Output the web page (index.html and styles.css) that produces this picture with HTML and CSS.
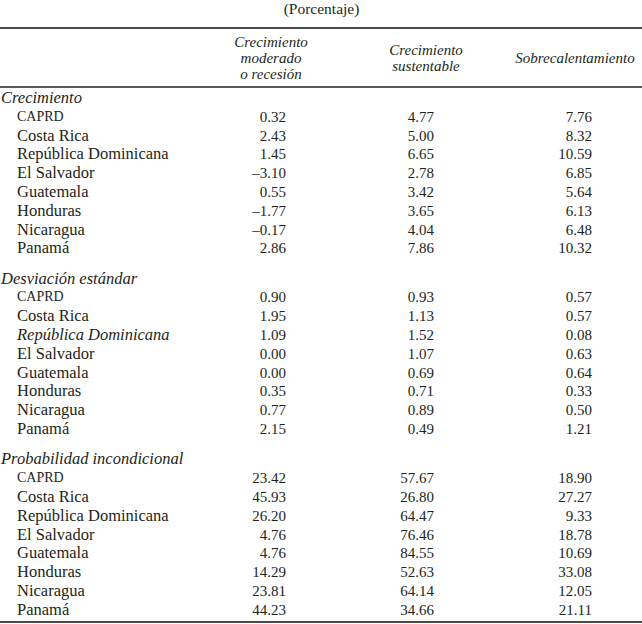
FILE: index.html
```html
<!DOCTYPE html>
<html lang="es">
<head>
<meta charset="utf-8">
<title>Porcentaje</title>
<link rel="stylesheet" href="styles.css">
</head>
<body>
<div class="caption">(Porcentaje)</div>
<table class="tbl">
  <colgroup>
    <col class="c-label">
    <col class="c-a">
    <col class="c-b">
    <col class="c-c">
  </colgroup>
  <thead>
    <tr>
      <th></th>
      <th class="h-a">Crecimiento<br>moderado<br>o recesión</th>
      <th class="h-b">Crecimiento<br>sustentable</th>
      <th class="h-c">Sobrecalentamiento</th>
    </tr>
  </thead>
  <tbody>
    <tr class="sec first"><td colspan="4">Crecimiento</td></tr>
    <tr><td class="name sc">CAPRD</td><td class="na">0.32</td><td class="nb">4.77</td><td class="nc">7.76</td></tr>
    <tr><td class="name">Costa Rica</td><td class="na">2.43</td><td class="nb">5.00</td><td class="nc">8.32</td></tr>
    <tr><td class="name">República Dominicana</td><td class="na">1.45</td><td class="nb">6.65</td><td class="nc">10.59</td></tr>
    <tr><td class="name">El Salvador</td><td class="na">–3.10</td><td class="nb">2.78</td><td class="nc">6.85</td></tr>
    <tr><td class="name">Guatemala</td><td class="na">0.55</td><td class="nb">3.42</td><td class="nc">5.64</td></tr>
    <tr><td class="name">Honduras</td><td class="na">–1.77</td><td class="nb">3.65</td><td class="nc">6.13</td></tr>
    <tr><td class="name">Nicaragua</td><td class="na">–0.17</td><td class="nb">4.04</td><td class="nc">6.48</td></tr>
    <tr><td class="name">Panamá</td><td class="na">2.86</td><td class="nb">7.86</td><td class="nc">10.32</td></tr>

    <tr class="sec gap"><td colspan="4">Desviación estándar</td></tr>
    <tr><td class="name sc">CAPRD</td><td class="na">0.90</td><td class="nb">0.93</td><td class="nc">0.57</td></tr>
    <tr><td class="name">Costa Rica</td><td class="na">1.95</td><td class="nb">1.13</td><td class="nc">0.57</td></tr>
    <tr><td class="name it">República Dominicana</td><td class="na">1.09</td><td class="nb">1.52</td><td class="nc">0.08</td></tr>
    <tr><td class="name">El Salvador</td><td class="na">0.00</td><td class="nb">1.07</td><td class="nc">0.63</td></tr>
    <tr><td class="name">Guatemala</td><td class="na">0.00</td><td class="nb">0.69</td><td class="nc">0.64</td></tr>
    <tr><td class="name">Honduras</td><td class="na">0.35</td><td class="nb">0.71</td><td class="nc">0.33</td></tr>
    <tr><td class="name">Nicaragua</td><td class="na">0.77</td><td class="nb">0.89</td><td class="nc">0.50</td></tr>
    <tr><td class="name">Panamá</td><td class="na">2.15</td><td class="nb">0.49</td><td class="nc">1.21</td></tr>

    <tr class="sec gap"><td colspan="4">Probabilidad incondicional</td></tr>
    <tr><td class="name sc">CAPRD</td><td class="na">23.42</td><td class="nb">57.67</td><td class="nc">18.90</td></tr>
    <tr><td class="name">Costa Rica</td><td class="na">45.93</td><td class="nb">26.80</td><td class="nc">27.27</td></tr>
    <tr><td class="name">República Dominicana</td><td class="na">26.20</td><td class="nb">64.47</td><td class="nc">9.33</td></tr>
    <tr><td class="name">El Salvador</td><td class="na">4.76</td><td class="nb">76.46</td><td class="nc">18.78</td></tr>
    <tr><td class="name">Guatemala</td><td class="na">4.76</td><td class="nb">84.55</td><td class="nc">10.69</td></tr>
    <tr><td class="name">Honduras</td><td class="na">14.29</td><td class="nb">52.63</td><td class="nc">33.08</td></tr>
    <tr><td class="name">Nicaragua</td><td class="na">23.81</td><td class="nb">64.14</td><td class="nc">12.05</td></tr>
    <tr class="last"><td class="name">Panamá</td><td class="na">44.23</td><td class="nb">34.66</td><td class="nc">21.11</td></tr>
  </tbody>
</table>
</body>
</html>
```

FILE: styles.css
```css
html, body {
  margin: 0;
  padding: 0;
  background: #ffffff;
}

body {
  font-family: "Liberation Serif", "Times New Roman", serif;
  color: #231f20;
  width: 642px;
}

.caption {
  height: 27px;
  font-size: 15.5px;
  line-height: 18px;
  text-align: center;
  padding-left: 1px;
}

.tbl {
  width: 642px;
  border-collapse: collapse;
  table-layout: fixed;
  border-top: 2px solid #4a4a4a;
  border-bottom: 2px solid #4a4a4a;
}

.c-label { width: 208px; }
.c-a { width: 126px; }
.c-b { width: 176px; }
.c-c { width: 132px; }

.tbl thead th {
  font-weight: normal;
  font-style: italic;
  font-size: 15px;
  line-height: 16px;
  padding: 5px 0 4px 0;
  text-align: center;
  vertical-align: middle;
  border-bottom: 2px solid #5a5a5a;
}

.tbl thead th.h-b { padding-left: 8px; }
.tbl thead th.h-c { padding-right: 2px; }

.tbl td {
  padding: 0;
  height: 18.8px;
  line-height: 18.8px;
  font-size: 15px;
  white-space: nowrap;
  vertical-align: bottom;
}

.tbl tr.sec td {
  font-style: italic;
  font-size: 16.5px;
  padding-left: 1px;
}

.tbl tr.first td {
  padding-top: 1px;
}

.tbl tr.gap td {
  padding-top: 11.5px;
}

.tbl td.name {
  font-size: 16.5px;
  padding-left: 17px;
}

.tbl td.name.sc {
  font-size: 14px;
}

.tbl td.name.it {
  font-style: italic;
}

.tbl td.na {
  text-align: right;
  padding-right: 48px;
}

.tbl td.nb {
  text-align: right;
  padding-right: 76px;
}

.tbl td.nc {
  text-align: right;
  padding-right: 50px;
}

.tbl tr.last td {
  padding-bottom: 1px;
}
```
